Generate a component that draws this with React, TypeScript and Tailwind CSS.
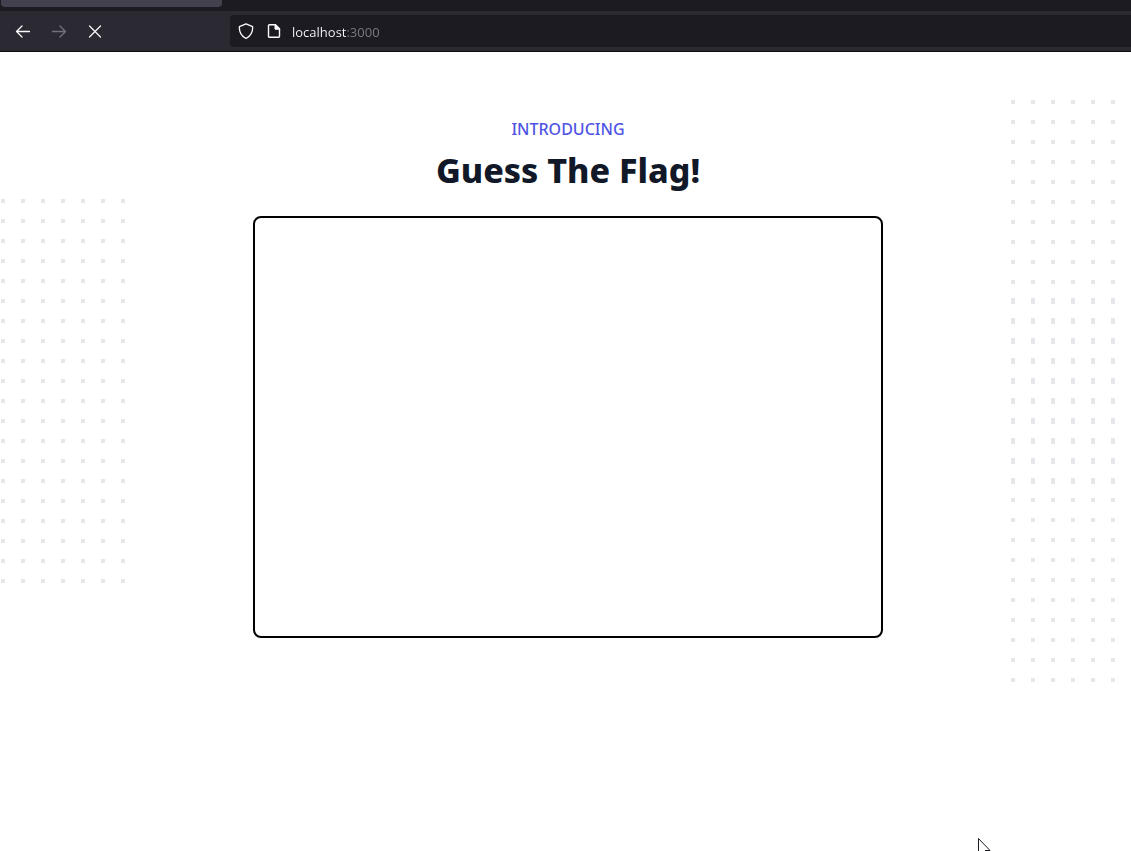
import React from "react";

type DotsProps = { id: string; columns: number; rows: number; className: string };

function Dots({ id, columns, rows, className }: DotsProps) {
  const width = columns * 20;
  const height = rows * 20;
  return (
    <svg
      className={`absolute text-[#e5e7eb] ${className}`}
      width={width}
      height={height}
      aria-hidden="true"
    >
      <defs>
        <pattern id={id} width="20" height="20" patternUnits="userSpaceOnUse">
          <rect width="4" height="4" fill="currentColor" />
        </pattern>
      </defs>
      <rect width={width} height={height} fill={`url(#${id})`} />
    </svg>
  );
}

function BrowserBar() {
  return (
    <header className="bg-[#1c1b22]">
      <div className="h-[11px]">
        <div className="ml-px h-[7px] w-[221px] rounded-b bg-[#42414d]" />
      </div>
      <div className="flex h-[41px] items-center border-b border-[#0c0c0d] bg-[#2b2a33]">
        <nav className="flex w-[230px] shrink-0 items-center gap-5 pl-[15px] text-[#fbfbfe]">
          <button type="button" aria-label="Back" className="size-4">
            <svg width="16" height="16" viewBox="0 0 16 16" fill="none" stroke="currentColor" strokeWidth="1.3" strokeLinecap="round" strokeLinejoin="round">
              <path d="M14.5 8.5H1.5M7 3 1.5 8.5 7 14" />
            </svg>
          </button>
          <button type="button" aria-label="Forward" disabled className="size-4 text-[#73727c]">
            <svg width="16" height="16" viewBox="0 0 16 16" fill="none" stroke="currentColor" strokeWidth="1.3" strokeLinecap="round" strokeLinejoin="round">
              <path d="M1.5 8.5h13M9 3l5.500 5.500L9 14" />
            </svg>
          </button>
          <button type="button" aria-label="Stop" className="size-4">
            <svg width="16" height="16" viewBox="0 0 16 16" fill="none" stroke="currentColor" strokeWidth="1.2" strokeLinecap="round">
              <path d="M2.500 3l11 11M13.500 3l-11 11" />
            </svg>
          </button>
        </nav>
        <div className="flex h-8 flex-1 items-center rounded-l bg-[#1c1b22] pl-2 text-[#fbfbfe]">
          <svg className="shrink-0" width="16" height="16" viewBox="0 0 16 16" fill="none" stroke="currentColor" strokeWidth="1.3" strokeLinejoin="round" aria-hidden="true">
            <path d="M8 .8 14.600 3.600C15 8.500 13 12.800 8 15.500 3 12.800 1 8.500 1.400 3.600Z" />
          </svg>
          <svg className="ml-3 shrink-0" width="16" height="16" viewBox="0 0 16 16" aria-hidden="true">
            <path d="M3.500 1.700h6l4 4v7.600a1 1 0 0 1-1 1h-9a1 1 0 0 1-1-1V2.700a1 1 0 0 1 1-1Z" fill="none" stroke="currentColor" strokeWidth="1.400" strokeLinejoin="round" />
            <path d="M9 1.500v4.700h4.700Z" fill="currentColor" stroke="currentColor" strokeLinejoin="round" />
          </svg>
          <input
            type="text"
            aria-label="Address"
            defaultValue="localhost:3000"
            className="ml-[10px] w-full min-w-0 flex-1 bg-linear-to-r from-[#fbfbfe] from-[54px] to-[#7c7b87] to-[54px] bg-clip-text pt-[2px] font-['Open_Sans','Noto_Sans',sans-serif] text-[13px] leading-5 text-transparent outline-none"
          />
        </div>
      </div>
    </header>
  );
}

export default function App() {
  return (
    <div className="flex min-h-screen flex-col bg-white font-['Noto_Sans',sans-serif]">
      <BrowserBar />
      <main className="relative flex-1 overflow-hidden pt-[65px] pl-[5px]">
        <Dots id="dots-left" columns={7} rows={20} className="top-[147px] left-px" />
        <Dots id="dots-right-top" columns={6} rows={20} className="top-12 right-0" />
        <Dots id="dots-right-bottom" columns={6} rows={20} className="top-[246px] right-0" />
        <section className="flex flex-col items-center text-center">
          <p className="text-base leading-6 font-medium text-[#4f54e5] uppercase">Introducing</p>
          <h1 className="mt-[9px] text-[34px] leading-10 font-extrabold text-[#111827]">Guess The Flag!</h1>
          <div className="mt-[26px] h-[422px] w-full max-w-[630px] rounded-lg border-2 border-black" />
        </section>
        <svg className="absolute bottom-0 left-[978px]" width="13" height="13" viewBox="0 0 13 13" aria-hidden="true">
          <path d="M.5 20V.5L12 12.500H7" fill="#fff" stroke="#1c1b22" />
        </svg>
      </main>
    </div>
  );
}
